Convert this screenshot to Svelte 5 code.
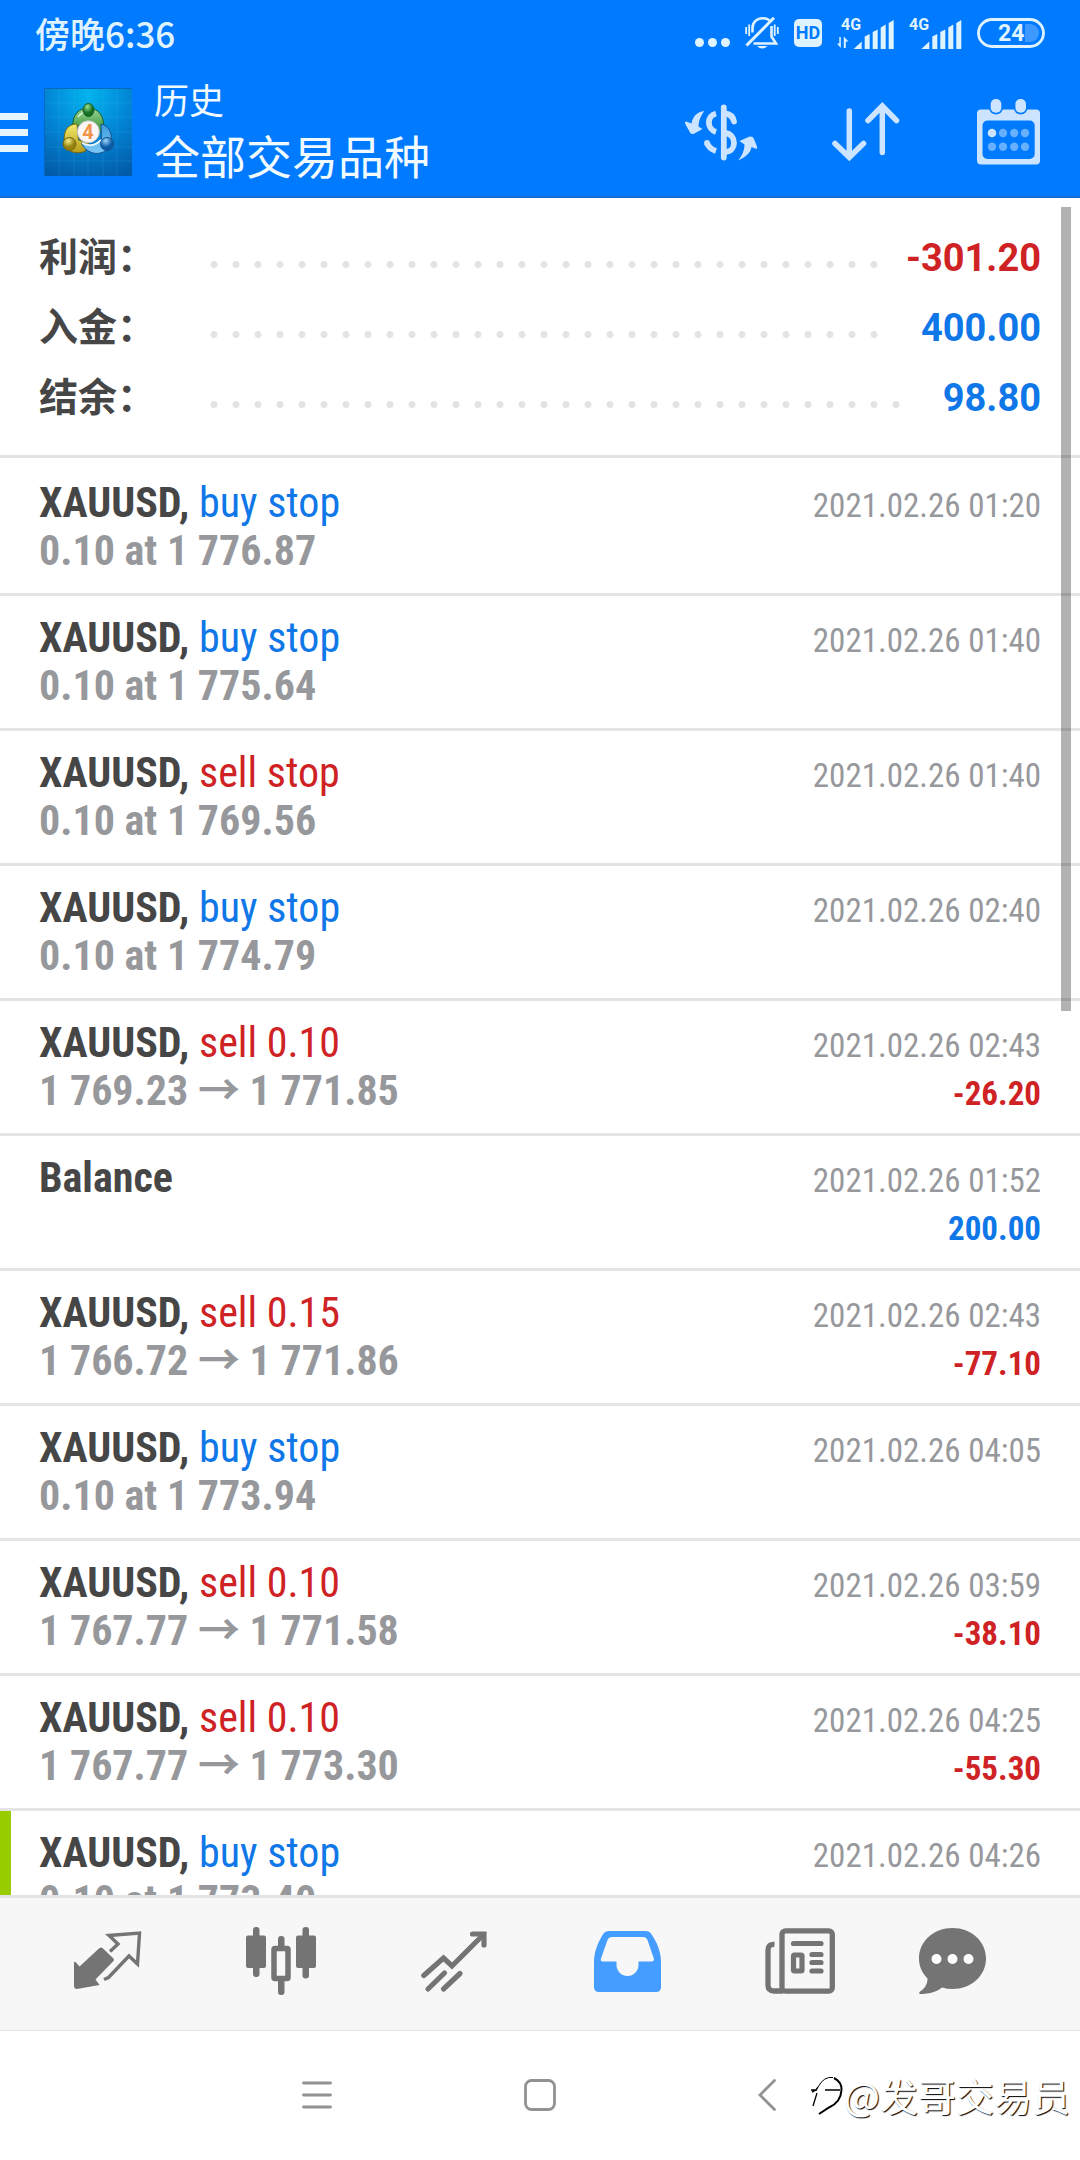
<script lang="ts">
  type Side = 'buy' | 'sell';

  type Deal = {
    symbol: string;
    action?: string;
    side?: Side;
    details?: string;
    time: string;
    profit?: string;
    marked?: boolean;
  };

  const summary = [
    { label: '利润：', value: '-301.20' },
    { label: '入金：', value: '400.00' },
    { label: '结余：', value: '98.80' },
  ];

  const deals: Deal[] = [
    { symbol: 'XAUUSD', action: 'buy stop', side: 'buy', details: '0.10 at 1 776.87', time: '2021.02.26 01:20' },
    { symbol: 'XAUUSD', action: 'buy stop', side: 'buy', details: '0.10 at 1 775.64', time: '2021.02.26 01:40' },
    { symbol: 'XAUUSD', action: 'sell stop', side: 'sell', details: '0.10 at 1 769.56', time: '2021.02.26 01:40' },
    { symbol: 'XAUUSD', action: 'buy stop', side: 'buy', details: '0.10 at 1 774.79', time: '2021.02.26 02:40' },
    { symbol: 'XAUUSD', action: 'sell 0.10', side: 'sell', details: '1 769.23 → 1 771.85', time: '2021.02.26 02:43', profit: '-26.20' },
    { symbol: 'Balance', time: '2021.02.26 01:52', profit: '200.00' },
    { symbol: 'XAUUSD', action: 'sell 0.15', side: 'sell', details: '1 766.72 → 1 771.86', time: '2021.02.26 02:43', profit: '-77.10' },
    { symbol: 'XAUUSD', action: 'buy stop', side: 'buy', details: '0.10 at 1 773.94', time: '2021.02.26 04:05' },
    { symbol: 'XAUUSD', action: 'sell 0.10', side: 'sell', details: '1 767.77 → 1 771.58', time: '2021.02.26 03:59', profit: '-38.10' },
    { symbol: 'XAUUSD', action: 'sell 0.10', side: 'sell', details: '1 767.77 → 1 773.30', time: '2021.02.26 04:25', profit: '-55.30' },
    { symbol: 'XAUUSD', action: 'buy stop', side: 'buy', details: '0.10 at 1 773.40', time: '2021.02.26 04:26', marked: true },
  ];

  function isLoss(value: string): boolean {
    return value.startsWith('-');
  }
</script>

<div class="screen">
  <header>
    <div class="status">
      <span class="clock">傍晚6:36</span>
      <div class="status-icons">
        <svg width="35" height="32" viewBox="0 0 35 32" fill="currentColor">
          <circle cx="4.5" cy="25.5" r="4.5" />
          <circle cx="17.5" cy="25.5" r="4.5" />
          <circle cx="30.5" cy="25.5" r="4.5" />
        </svg>
        <svg width="34" height="32" viewBox="0 0 34 32" fill="none" stroke="currentColor" stroke-width="2.6">
          <path d="M7.5 15.5V11C7.5 5 12 1.2 18 1.2c2.6 0 4.8.7 6.5 2" />
          <path d="M26.5 9v10.500l4.500 7H8.500" />
          <path d="M1.5 28.5L29 .8" stroke-width="3" />
          <path d="M1.2 10v7M4.2 7.500v11.500M29.700 7.500v11.500M32.800 10v7" stroke-width="1.8" />
          <path d="M12 29h10.500q-5.200 5-10.500 0z" fill="currentColor" stroke="none" />
        </svg>
        <span class="hd">HD</span>
        <svg width="57" height="31" viewBox="0 0 57 31" fill="currentColor">
          <text x="4" y="12" class="net">4G</text>
          <path d="M3.800 19v11L0 25.500h2.300V19zM6.800 30V18.500l4.600 5H8.800V30z" />
          <path d="M16.700 31l8-7.500V31zM27.700 18.500l5-2.500v15h-5zM35.700 14l5-2.500V31h-5zM43.700 9.500l5-3V31h-5zM51.700 5l5-3v29h-5z" />
        </svg>
        <svg width="53" height="31" viewBox="0 0 53 31" fill="currentColor">
          <text x="0" y="12" class="net">4G</text>
          <path d="M12.300 31l8-7.500V31zM23.300 18.500l5-2.500v15h-5zM31.300 14l5-2.500V31h-5zM39.300 9.500l5-3V31h-5zM47.300 5l5-3v29h-5z" />
        </svg>
        <svg width="68" height="30" viewBox="0 0 68 30">
          <rect x="1.5" y="1.5" width="65" height="27" rx="13.5" fill="none" stroke="currentColor" stroke-width="2.8" />
          <path d="M48 6h5a9 9 0 0 1 0 18h-5z" fill="#3d99ff" />
          <text x="21" y="23" class="charge" fill="currentColor">24</text>
        </svg>
      </div>
    </div>

    <div class="appbar">
      <button class="menu" aria-label="菜单"><i></i><i></i><i></i></button>
      <svg class="logo" width="88" height="88" viewBox="0 0 88 88">
        <defs>
          <radialGradient id="sky" cx="0.5" cy="0.08" r="1">
            <stop offset="0" stop-color="#02b4ef" />
            <stop offset="0.5" stop-color="#0284d4" />
            <stop offset="1" stop-color="#025aa8" />
          </radialGradient>
          <linearGradient id="leaf" x2="0" y2="1">
            <stop offset="0" stop-color="#9ad492" />
            <stop offset="1" stop-color="#2b8a2e" />
          </linearGradient>
          <linearGradient id="gold" x2="0" y2="1">
            <stop offset="0" stop-color="#f3ec6c" />
            <stop offset="1" stop-color="#b59a17" />
          </linearGradient>
          <linearGradient id="wave" x2="0" y2="1">
            <stop offset="0" stop-color="#3b9be0" />
            <stop offset="1" stop-color="#7cc8f5" />
          </linearGradient>
          <radialGradient id="leafHead" cx="0.4" cy="0.25"><stop stop-color="#9be08f" /><stop offset="1" stop-color="#126e20" /></radialGradient>
          <radialGradient id="goldHead" cx="0.4" cy="0.25"><stop stop-color="#f5ee85" /><stop offset="1" stop-color="#94810e" /></radialGradient>
          <radialGradient id="waveHead" cx="0.4" cy="0.25"><stop stop-color="#9ad6fb" /><stop offset="1" stop-color="#0b5aa5" /></radialGradient>
        </defs>
        <rect width="88" height="88" fill="url(#sky)" />
        <path d="M15 0v88M30 0v88M44 0v88M59 0v88M73 0v88M0 15h88M0 29h88M0 44h88M0 59h88M0 73h88" stroke="#6cc8ff" stroke-opacity="0.14" />
        <path d="M.5 88V.5H88" fill="none" stroke="#0869b8" />
        <path d="M29 38C28 27 35 20 44.500 20S61 28 59.500 41L53 46 46 33 38 38z" fill="url(#leaf)" stroke="#155f26" />
        <path d="M34 29c3-4 6-5.500 10-5.500" stroke="#d7f3cf" stroke-width="1.5" fill="none" />
        <path d="M33 36C22 36 19 45 20.500 56c3 8 12 11 21 7l3-8-10-3-1-9z" fill="url(#gold)" stroke="#776710" />
        <path d="M57 36c9 2 12 11 9.500 21-3 8-15 11-22 6-4-2-6-5-7-8 7 3 14 2 20-4z" fill="url(#wave)" stroke="#14558f" />
        <path d="M38 55c7 4 14 2 19-3" stroke="#e5f5ff" stroke-width="2" fill="none" />
        <ellipse cx="44.500" cy="22" rx="5.500" ry="6.500" fill="url(#leafHead)" stroke="#155f26" />
        <circle cx="25.500" cy="56" r="6.500" fill="url(#goldHead)" stroke="#776710" />
        <circle cx="63" cy="56" r="6.500" fill="url(#waveHead)" stroke="#14558f" />
        <circle cx="44.400" cy="43.700" r="11" fill="#fbf6f3" stroke="#b9c4c8" />
        <text x="44" y="50.500" text-anchor="middle" class="four">4</text>
      </svg>
      <h1>
        <small>历史</small>
        <span>全部交易品种</span>
      </h1>
      <div class="actions">
        <button aria-label="货币">
          <svg width="72" height="57" viewBox="0 0 72 57" fill="none" stroke="currentColor" stroke-width="5.8">
            <path d="M19.500 7C12 7.500 7.500 13 6.500 19.500L1 17.500Q-.5 17.500 0 19.500L5 28.500Q6.500 31 9.500 29.500L17.500 25 13.500 22.500C13.500 17 16 11 19.500 7z" fill="currentColor" stroke="none" />
            <path d="M53 56.500c7-3 12.500-7 13.500-13.500l5 2q.9-.6.5-2.500L69 35q-1-3-5-2.300L54.500 37l5 3.500C59.500 46 57 52 53 56.500z" fill="currentColor" stroke="none" />
            <path d="M38.800 3.500v50" stroke-linecap="round" />
            <path d="M31 9.500C21.500 12 21.500 25 31 28" />
            <path d="M40 9.500c5 .5 8 3 9 8" stroke-linecap="round" />
            <path d="M40 29c12 1 12 19 0 19" />
            <path d="M22 39c1.500 4 4.500 6.500 9 8" />
            <circle cx="22" cy="39" r="2.900" fill="currentColor" stroke="none" />
          </svg>
        </button>
        <button aria-label="排序">
          <svg width="70" height="60" viewBox="0 0 70 60" fill="none" stroke="currentColor" stroke-width="5.5" stroke-linecap="round">
            <path d="M17.300 9v44M3 41.500L17.300 55.300 31.500 41.500M50.300 50.500V6M36 18.500L50.300 4 64.500 18.500" />
          </svg>
        </button>
        <button aria-label="日历">
          <svg width="63" height="66" viewBox="0 0 63 66" fill="currentColor">
            <path fill-rule="evenodd" d="M4 10.500h55a4 4 0 0 1 4 4V61.500a4 4 0 0 1-4 4H4a4 4 0 0 1-4-4V14.500a4 4 0 0 1 4-4zM10.500 21.500a5 5 0 0 0-5 5V55a5 5 0 0 0 5 5H52.700a5 5 0 0 0 5-5V26.500a5 5 0 0 0-5-5z" />
            <rect x="12" y="-1.500" width="14" height="17" rx="7" fill="#007aff" />
            <rect x="36.700" y="-1.500" width="14" height="17" rx="7" fill="#007aff" />
            <rect x="13.700" y="0" width="10.600" height="13.800" rx="5" />
            <rect x="38.400" y="0" width="10.600" height="13.800" rx="5" />
            <circle cx="15" cy="34" r="4.300" />
            <g fill="#66b0ff">
              <circle cx="26" cy="34" r="4.200" />
              <circle cx="37.200" cy="34" r="4.200" />
              <circle cx="48" cy="34" r="4.200" />
              <circle cx="15" cy="47.700" r="4.200" />
              <circle cx="26" cy="47.700" r="4.200" />
              <circle cx="37.200" cy="47.700" r="4.200" />
              <circle cx="48" cy="47.700" r="4.200" />
            </g>
          </svg>
        </button>
      </div>
    </div>
  </header>

  <main>
    <dl class="summary">
      {#each summary as item (item.label)}
        <div class="total">
          <dt>{item.label}</dt>
          <i class="leader"></i>
          <dd class:loss={isLoss(item.value)}>{item.value}</dd>
        </div>
      {/each}
    </dl>

    <ul class="deals">
      {#each deals as deal}
        <li class:marked={deal.marked}>
          <div class="line">
            <span>
              <b>{deal.symbol}{deal.action ? ',' : ''}</b>
              {#if deal.action}<span class={deal.side}>{deal.action}</span>{/if}
            </span>
            <time>{deal.time}</time>
          </div>
          <div class="line">
            <span class="details">{deal.details ?? '\u00a0'}</span>
            {#if deal.profit}
              <span class="profit" class:loss={isLoss(deal.profit)}>{deal.profit}</span>
            {/if}
          </div>
        </li>
      {/each}
    </ul>
    <div class="thumb"></div>
  </main>

  <nav class="tabs">
    <button aria-label="行情">
      <svg width="68" height="60" viewBox="0 0 68 60" fill="none" stroke="currentColor" stroke-width="3.4">
        <path d="M28.500 17L39.500 27.500q1 1 0 2.500L21.500 48.500 25.500 54 3 58Q0 58 0 55V32q0-2 2-.5l3.500 4L25.500 17q1.500-1 3 0z" fill="currentColor" stroke="none" />
        <path d="M36 20.500L44 13 35 4.500 65.500 2 63.500 33 55 25 34.500 46.500 30 48.500" />
      </svg>
    </button>
    <button aria-label="图表">
      <svg width="70" height="68" viewBox="0 0 70 68" fill="currentColor">
        <rect x="0" y="8.500" width="20" height="32.500" rx="2" />
        <rect x="7" y="0" width="6.500" height="50" rx="3" />
        <rect x="50" y="8.500" width="20" height="32.500" rx="2" />
        <rect x="56.500" y="0" width="6.500" height="51.500" rx="3" />
        <rect x="32" y="9" width="6.500" height="14" rx="3" />
        <rect x="32" y="50" width="6.500" height="18" rx="3" />
        <rect x="28" y="21.500" width="14" height="30" rx="1" fill="none" stroke="currentColor" stroke-width="5.5" />
      </svg>
    </button>
    <button aria-label="交易">
      <svg width="66" height="61" viewBox="0 0 66 61" fill="none" stroke="currentColor" stroke-width="5.2" stroke-linecap="round">
        <path d="M2.800 44.500L22.500 27 31 35 62 4" />
        <path d="M51.500 3H63v11" />
        <path d="M7 58L23.500 42M22.500 58L39 42.500" />
      </svg>
    </button>
    <button aria-label="历史" class="active">
      <svg width="67" height="61" viewBox="0 0 67 61" fill="currentColor">
        <path fill-rule="evenodd" d="M14.500 0H52q3.500 0 5 2.500C63 11 67 21 67 31V56q0 5-5 5H5q-5 0-5-5V31C0 21 4 11 9.500 2.500Q11 0 14.500 0zM18 6q-3 0-4.500 3L7 27.500q-1 3 2 3H22.500V34a11 11 0 0 0 22 0V30.500H57.500q3 0 2.300-3L53.500 9Q52 6 49 6z" />
      </svg>
    </button>
    <button aria-label="新闻">
      <svg width="70" height="66" viewBox="0 0 70 66" fill="none" stroke="currentColor">
        <rect x="17" y="2.800" width="50.300" height="60.400" rx="3.500" stroke-width="5.3" />
        <path d="M9.500 16.500Q3 16 3 22V57q0 6 6 6H18" stroke-width="5.3" />
        <path d="M28.500 15.500H56M47 26.500h9M47 34.500h9M47 43h9" stroke-width="5.2" stroke-linecap="round" />
        <rect x="28.500" y="27" width="8.500" height="16" rx="1" stroke-width="5.2" />
      </svg>
    </button>
    <button aria-label="消息">
      <svg width="67" height="66" viewBox="0 0 67 66">
        <path d="M33.500 0C52 0 67 13 67 30.500S52 61 33.500 61c-3.500 0-7-.5-10.500-1.500C18 64 9 66 1.500 66q-2.500-.5-.5-2.500C6.500 60 8.500 55.500 8.500 50.500 3 45 0 38 0 30.500 0 13 15 0 33.500 0z" fill="currentColor" />
        <g fill="#fff">
          <circle cx="17.500" cy="31" r="5" />
          <circle cx="33.500" cy="31" r="5" />
          <circle cx="49.500" cy="31" r="5" />
        </g>
      </svg>
    </button>
  </nav>

  <footer class="system">
    <button aria-label="最近任务">
      <svg width="30" height="28" viewBox="0 0 30 28" stroke="currentColor" stroke-width="2.8" stroke-linecap="round">
        <path d="M1.500 2h27M1.500 14h27M1.500 26h27" />
      </svg>
    </button>
    <button aria-label="主屏幕">
      <svg width="32" height="32" viewBox="0 0 32 32" fill="none" stroke="currentColor" stroke-width="2.8">
        <rect x="1.500" y="1.500" width="29" height="29" rx="6" />
      </svg>
    </button>
    <button aria-label="返回">
      <svg width="18" height="32" viewBox="0 0 18 32" fill="none" stroke="currentColor" stroke-width="2.8" stroke-linecap="round">
        <path d="M16.500 1.500L2 16 16.500 30.500" />
      </svg>
    </button>
    <div class="signature">
      <svg width="34" height="42" viewBox="0 0 34 42" fill="none" stroke="#000">
        <path d="M8 13Q14 2 23 3.500" stroke-width="1" />
        <path d="M24 4Q32 8 31.500 16 31 28 19 33.500L9 40" stroke-width="2" />
        <path d="M3 32L7 19M1 16h6M15 16h15M8 13q-2 4-6 5" stroke-width="1.3" />
      </svg>
      <span>@发哥交易员</span>
    </div>
  </footer>
</div>

<style>
  :global(body) {
    background: #fff;
    font-family: Roboto, 'Noto Sans CJK SC', sans-serif;
  }

  .screen {
    display: flex;
    flex-direction: column;
    height: 100vh;
    overflow: hidden;
  }

  button {
    display: flex;
    align-items: center;
    justify-content: center;
    padding: 0;
    border: none;
    background: none;
    color: inherit;
    cursor: pointer;
  }

  svg {
    display: block;
    flex-shrink: 0;
    overflow: visible;
  }

  header {
    background: #007aff;
    border-bottom: 2px solid #116ed4;
    color: #cce4ff;
  }

  .status {
    display: flex;
    align-items: center;
    justify-content: space-between;
    height: 66px;
    padding: 0 35px;
    color: #dff3ff;
  }

  .clock {
    font-family: 'Noto Sans CJK SC', sans-serif;
    font-size: 35px;
    font-weight: 500;
    line-height: 40px;
  }

  .status-icons {
    display: flex;
    align-items: center;
    gap: 15px;
  }

  .hd {
    width: 28px;
    border-radius: 5px;
    background: #dff3ff;
    color: #007aff;
    font-size: 18px;
    font-weight: 700;
    line-height: 28px;
    text-align: center;
  }

  .net {
    font-size: 16px;
    font-weight: 700;
  }

  .charge {
    font-size: 23px;
    font-weight: 700;
  }

  .appbar {
    display: flex;
    align-items: center;
    height: 128px;
    padding: 2px 40px 0 0;
  }

  .menu {
    flex-direction: column;
    align-items: flex-start;
    gap: 9px;
    margin-right: 16px;
  }

  .menu i {
    width: 28px;
    height: 7px;
    background: #e6f5ff;
  }

  .four {
    fill: #f0934a;
    font-size: 20px;
    font-weight: 700;
  }

  h1 {
    display: flex;
    flex-direction: column;
    flex: 1;
    margin: 0 0 0 22px;
    color: #f0faff;
    font-family: 'Noto Sans CJK SC', sans-serif;
    font-size: 46px;
    font-weight: 400;
    line-height: 66px;
  }

  small {
    font-size: 35px;
    line-height: 44px;
  }

  .actions {
    display: flex;
    align-items: center;
    gap: 75px;
  }

  main {
    position: relative;
    flex: 1;
    min-height: 0;
    overflow: hidden;
  }

  .summary {
    margin: 0;
    padding: 25px 39px 22px;
    border-bottom: 3px solid #e4e4e4;
  }

  .total {
    display: flex;
    align-items: baseline;
    height: 70px;
    line-height: 70px;
  }

  dt {
    width: 171px;
    color: #464646;
    font-size: 39px;
    font-weight: 700;
  }

  .leader {
    display: flex;
    flex: 1;
    align-self: center;
    margin: 13px 10px 0 0;
  }

  /* whole dots only: the width snaps down to the 22px step */
  .leader::before {
    content: '';
    width: round(down, 100%, 22px);
    height: 7px;
    background: radial-gradient(circle at 4px center, #e3e3e3 3px, transparent 4px) 0 0 / 22px 7px repeat-x;
  }

  dd {
    margin: 0;
    color: #0f77e8;
    font-size: 38px;
    font-weight: 700;
  }

  .deals {
    margin: 0;
    padding: 3px 0 0;
    list-style: none;
    font-family: 'Roboto Condensed', Roboto, 'Noto Sans CJK SC', sans-serif;
  }

  .deals li {
    padding: 18px 39px;
    border-bottom: 3px solid #e4e4e4;
  }

  .deals li.marked {
    padding-left: 28px;
    border-left: 11px solid #99cc00;
  }

  .line {
    display: flex;
    align-items: baseline;
    justify-content: space-between;
    height: 48px;
    font-size: 42px;
    line-height: 48px;
    white-space: nowrap;
  }

  b {
    color: #464646;
  }

  .buy {
    color: #0f77e8;
  }

  .sell {
    color: #cf2224;
  }

  .details {
    color: #97989c;
    font-weight: 700;
  }

  time {
    color: #97989c;
    font-size: 33px;
  }

  .profit {
    color: #0f77e8;
    font-size: 33px;
    font-weight: 700;
  }

  .loss {
    color: #cf2224;
  }

  .thumb {
    position: absolute;
    top: 9px;
    right: 9px;
    width: 10px;
    height: 47.4%;
    background: rgba(0, 0, 0, 0.3);
  }

  .tabs {
    display: grid;
    grid-template-columns: repeat(6, 1fr);
    height: 132px;
    padding: 0 20px 0 21px;
    border-top: 3px solid #e4e4e4;
    border-bottom: 1px solid #e4e4e4;
    background: #f7f7f7;
    color: #747474;
  }

  .tabs button {
    padding-bottom: 6px;
  }

  .tabs .active {
    color: #459dff;
  }

  .tabs button:last-child {
    padding-right: 42px;
  }

  .system {
    position: relative;
    display: grid;
    grid-template-columns: repeat(3, 21%);
    justify-content: center;
    height: 127px;
    padding-bottom: 2px;
    color: #929292;
  }

  .system button:first-child {
    padding-left: 8px;
  }

  .signature {
    position: absolute;
    right: 10px;
    bottom: 38px;
    display: flex;
    align-items: center;
    color: #fff;
    font-family: 'Noto Sans CJK SC', sans-serif;
    font-size: 38px;
    line-height: 54px;
    text-shadow: 1px 1px 1px #000;
  }
</style>
